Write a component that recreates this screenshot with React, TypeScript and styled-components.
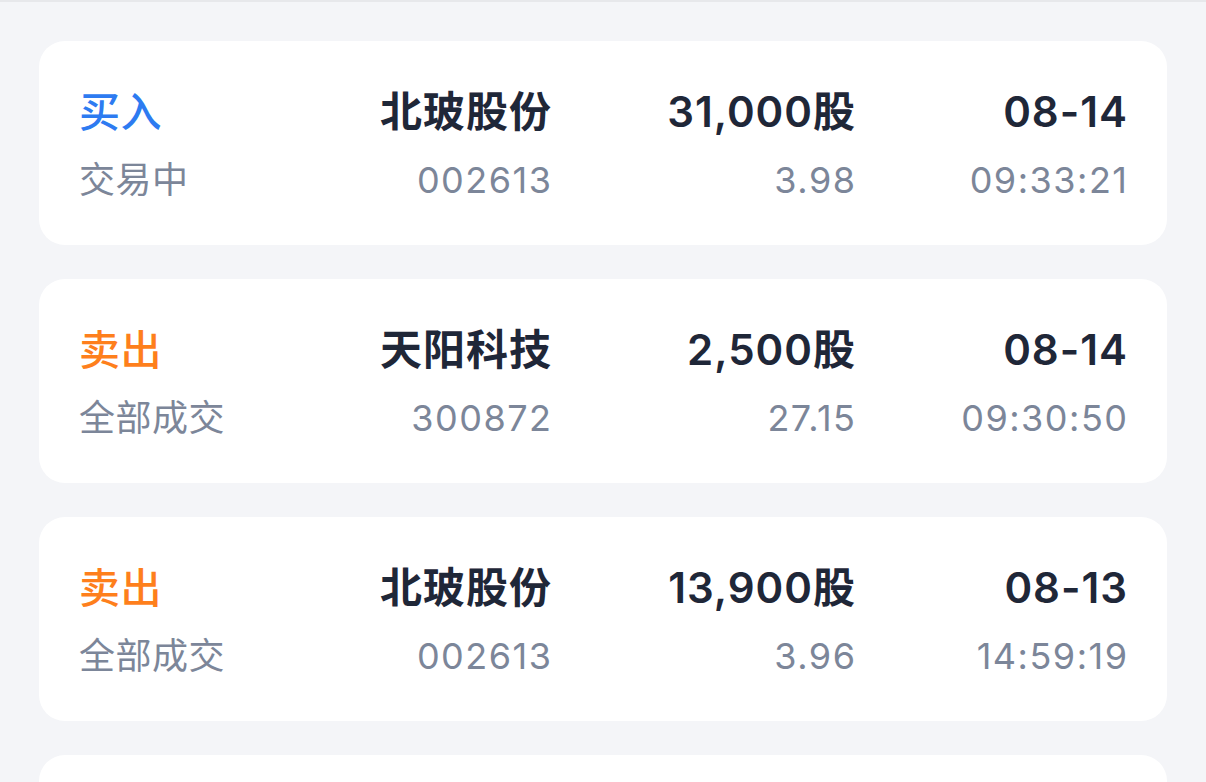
import styled, { createGlobalStyle } from "styled-components";

const GlobalStyle = createGlobalStyle`
  html, body {
    margin: 0;
    padding: 0;
    background: #f4f5f8;
  }
  body {
    font-family: Inter, "Noto Sans CJK SC", sans-serif;
    -webkit-font-smoothing: antialiased;
  }
`;

const Page = styled.div`
  height: 782px;
  overflow: hidden;
  border-top: 2px solid #e7e8eb;
  padding: 39px 39px 0;
  display: flex;
  flex-direction: column;
  gap: 34px;
  box-sizing: border-box;
`;

const Card = styled.div`
  flex: none;
  background: #ffffff;
  border-radius: 26px;
  height: 204px;
  box-sizing: border-box;
  padding: 43px 40px 41px;
  display: grid;
  grid-template-columns: 200px 272px 304px 272px;
  grid-template-rows: 56px 48px;
  row-gap: 16px;
`;

const Cell = styled.div<{ $align?: "left" | "right" }>`
  text-align: ${(p) => p.$align ?? "right"};
  white-space: nowrap;
`;

const Side = styled(Cell)<{ $sell: boolean }>`
  font-size: 41px;
  line-height: 56px;
  font-weight: 500;
  letter-spacing: 0.5px;
  color: ${(p) => (p.$sell ? "#fe7f1c" : "#2d7bf1")};
`;

const Main = styled(Cell)`
  font-size: 42px;
  line-height: 56px;
  font-weight: 600;
  letter-spacing: 1px;
  margin-right: -1px;
  color: #1f2738;
`;

const Sub = styled(Cell)`
  font-size: 36px;
  line-height: 48px;
  font-weight: 400;
  letter-spacing: 1.5px;
  margin-right: -1.5px;
  color: #7c8699;
`;

const SubLeft = styled(Sub)`
  letter-spacing: 0.5px;
  margin-right: 0;
`;

interface Order {
  side: "买入" | "卖出";
  status: string;
  name: string;
  code: string;
  qty: string;
  price: string;
  date: string;
  time: string;
}

const orders: Order[] = [
  { side: "买入", status: "交易中", name: "北玻股份", code: "002613", qty: "31,000股", price: "3.98", date: "08-14", time: "09:33:21" },
  { side: "卖出", status: "全部成交", name: "天阳科技", code: "300872", qty: "2,500股", price: "27.15", date: "08-14", time: "09:30:50" },
  { side: "卖出", status: "全部成交", name: "北玻股份", code: "002613", qty: "13,900股", price: "3.96", date: "08-13", time: "14:59:19" },
];

function OrderCard({ side, status, name, code, qty, price, date, time }: Order) {
  return (
    <Card>
      <Side $align="left" $sell={side === "卖出"}>{side}</Side>
      <Main>{name}</Main>
      <Main>{qty}</Main>
      <Main>{date}</Main>
      <SubLeft $align="left">{status}</SubLeft>
      <Sub>{code}</Sub>
      <Sub>{price}</Sub>
      <Sub>{time}</Sub>
    </Card>
  );
}

export default function App() {
  return (
    <>
      <GlobalStyle />
      <Page>
        {orders.map((o, i) => (
          <OrderCard key={i} {...o} />
        ))}
        {/* next card in the list, scrolled below the fold */}
        <Card />
      </Page>
    </>
  );
}
